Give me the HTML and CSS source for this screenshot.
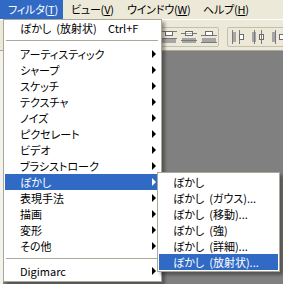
FILE: index.html
```html
<!DOCTYPE html>
<html>
  <head>
    <title>Filter Menu</title>
    <link rel="stylesheet" href="styles.css">
  </head>
  <body>
    <div class="screen">
      <div class="menubar">
        <span class="menu-title active">フィルタ(<u>T</u>)</span>
        <span class="menu-title">ビュー(<u>V</u>)</span>
        <span class="menu-title wide">ウインドウ(<u>W</u>)</span>
        <span class="menu-title">ヘルプ(<u>H</u>)</span>
      </div>

      <!-- Options bar with the distribute buttons -->
      <div class="toolbar">
        <div class="btn-group">
          <svg viewBox="0 0 16 16"><rect x="1" y="10" width="14" height="4" fill="#a6a6a6"/><path d="M0 2.5h16M0 9.5h16" stroke="#7a7a7a"/><rect x="4.5" y="2.5" width="7" height="4" fill="#fff" stroke="#6b6b6b"/></svg>
          <svg viewBox="0 0 16 16"><rect x="1" y="10" width="14" height="4" fill="#a6a6a6"/><path d="M0 2.5h16M0 9.5h16" stroke="#7a7a7a"/><rect x="4.5" y="2.5" width="7" height="4" fill="#fff" stroke="#6b6b6b"/></svg>
          <svg viewBox="0 0 16 16"><rect x="1" y="9" width="14" height="5" fill="#a6a6a6"/><path d="M0 4.5h16M0 11.5h16" stroke="#7a7a7a"/><rect x="4.5" y="2.5" width="7" height="4" fill="none" stroke="#6b6b6b"/><rect x="5" y="3" width="6" height="1.5" fill="#fff"/><rect x="5" y="5" width="6" height="1" fill="#fff"/></svg>
          <svg viewBox="0 0 16 16"><rect x="1" y="9" width="14" height="4" fill="#a6a6a6"/><path d="M0 6.5h16M0 13.5h16" stroke="#7a7a7a"/><rect x="4.5" y="2.5" width="7" height="4" fill="#fff" stroke="#6b6b6b"/></svg>
        </div>
        <div class="btn-group">
          <svg viewBox="0 0 16 16"><rect x="3" y="3" width="4" height="10" fill="#a6a6a6"/><path d="M3.5 1v14M10.5 1v14" stroke="#7a7a7a"/><rect x="10.5" y="5.5" width="4" height="5" fill="#fff" stroke="#6b6b6b"/></svg>
          <svg viewBox="0 0 16 16"><rect x="3" y="3" width="4" height="10" fill="#a6a6a6"/><path d="M5.5 1v14M12.5 1v14" stroke="#7a7a7a"/><rect x="10.5" y="5.5" width="4" height="5" fill="none" stroke="#6b6b6b"/><rect x="11" y="6" width="1" height="4" fill="#fff"/><rect x="13" y="6" width="1" height="4" fill="#fff"/></svg>
          <svg viewBox="0 0 16 16"><rect x="3" y="3" width="4" height="10" fill="#a6a6a6"/><path d="M6.5 1v14M14.5 1v14" stroke="#7a7a7a"/><rect x="10.5" y="5.5" width="4" height="5" fill="#fff" stroke="#6b6b6b"/></svg>
        </div>
      </div>

      <div class="workspace"></div>

      <!-- Filter dropdown -->
      <ul class="menu filter-menu">
        <li class="item"><span class="label">ぼかし&nbsp;&nbsp;(放射状)</span><span>Ctrl+F</span></li>
        <li class="sep"></li>
        <li class="item sub">アーティスティック</li>
        <li class="item sub">シャープ</li>
        <li class="item sub">スケッチ</li>
        <li class="item sub">テクスチャ</li>
        <li class="item sub">ノイズ</li>
        <li class="item sub">ピクセレート</li>
        <li class="item sub">ビデオ</li>
        <li class="item sub">ブラシストローク</li>
        <li class="item sub on">ぼかし</li>
        <li class="item sub">表現手法</li>
        <li class="item sub">描画</li>
        <li class="item sub">変形</li>
        <li class="item sub">その他</li>
        <li class="sep last"></li>
        <li class="item sub">Digimarc</li>
      </ul>

      <!-- Blur submenu -->
      <ul class="menu blur-menu">
        <li class="item">ぼかし</li>
        <li class="item">ぼかし&nbsp;&nbsp;(ガウス)...</li>
        <li class="item">ぼかし&nbsp;&nbsp;(移動)...</li>
        <li class="item">ぼかし&nbsp;&nbsp;(強)</li>
        <li class="item">ぼかし&nbsp;&nbsp;(詳細)...</li>
        <li class="item on">ぼかし&nbsp;&nbsp;(放射状)...</li>
      </ul>
    </div>
  </body>
</html>
```

FILE: styles.css
```css
body {
  margin: 0;
  width: 283px;
  height: 284px;
  overflow: hidden;
  background-color: #ece9d8;
  font-family: "Noto Sans CJK JP", "Liberation Sans", sans-serif;
  font-size: 11px;
  font-feature-settings: "palt";
  color: #000;
}

.screen {
  position: relative;
  height: 284px;
  display: flex;
  flex-direction: column;
}

/* Menu bar */
.menubar {
  height: 19px;
  display: flex;
  background-color: #ece9d8;
}

.menu-title {
  width: 56px;
  padding-left: 8px;
  box-sizing: border-box;
  line-height: 18px;
  white-space: nowrap;
  letter-spacing: -0.2px;
}

.menu-title.active {
  width: 63px;
  background-color: #316ac5;
  color: #fff;
}

.menu-title.wide {
  width: 76px;
}

/* Options bar */
.toolbar {
  height: 23px;
  padding-top: 7px;
  display: flex;
  align-items: flex-start;
  border-top: 1px solid #fff;
  border-bottom: 1px solid #aca899;
}

.btn-group {
  display: flex;
  gap: 4px;
  padding: 1px;
  margin-left: 139px;
  border: 1px solid #c3bfae;
  border-radius: 2px;
}

.btn-group + .btn-group {
  margin-left: 8px;
}

.btn-group svg {
  display: block;
  width: 16px;
  height: 16px;
}

.workspace {
  flex: 1;
  background-color: #808080;
  border-left: 3px solid #f3f2ec;
}

/* Menus */
.menu {
  position: absolute;
  margin: 0;
  list-style: none;
  background-color: #fff;
  border: 1px solid #aca899;
  box-shadow: 3px 3px 3px rgba(0, 0, 0, 0.35);
}

.filter-menu {
  left: 3px;
  top: 19px;
  width: 153px;
  padding: 0 3px 2px 1px;
}

.blur-menu {
  left: 157px;
  top: 172px;
  width: 119px;
  padding: 1px;
}

.item {
  height: 16px;
  display: flex;
  align-items: center;
  padding-left: 15px;
  line-height: 16px;
  white-space: nowrap;
}

.blur-menu .item {
  padding-left: 14px;
}

.item.on {
  background-color: #316ac5;
  color: #fff;
}

.label {
  width: 88px;
}

.sub::after {
  content: "";
  margin-left: auto;
  margin-right: 2px;
  border-left: 4px solid #000;
  border-top: 4px solid transparent;
  border-bottom: 4px solid transparent;
}

.item.on::after {
  border-left-color: #fff;
}

.sep {
  height: 1px;
  margin: 4px 0 5px 1px;
  background-color: #aca899;
}

.sep.last {
  margin-bottom: 4px;
}
```
